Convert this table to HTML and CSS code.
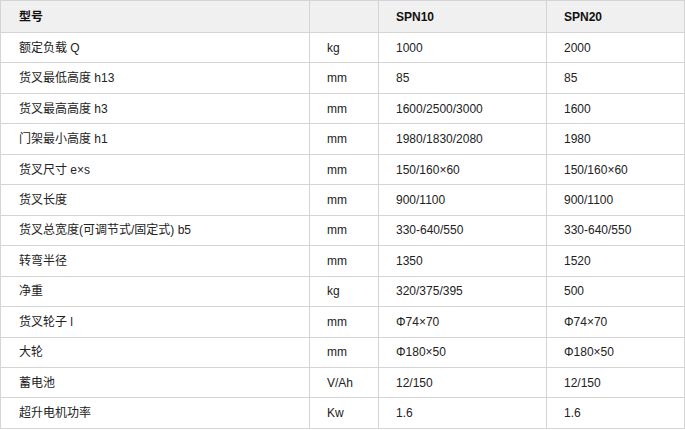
FILE: index.html
```html
<!DOCTYPE html>
<html lang="zh">
<head>
<meta charset="utf-8">
<link rel="stylesheet" href="styles.css">
</head>
<body>
<table class="spec">
  <colgroup>
    <col class="c1"><col class="c2"><col class="c3"><col class="c4">
  </colgroup>
  <thead>
    <tr class="head"><th>型号</th><th></th><th>SPN10</th><th>SPN20</th></tr>
  </thead>
  <tbody>
    <tr><td>额定负载 Q</td><td>kg</td><td>1000</td><td>2000</td></tr>
    <tr><td>货叉最低高度 h13</td><td>mm</td><td>85</td><td>85</td></tr>
    <tr><td>货叉最高高度 h3</td><td>mm</td><td>1600/2500/3000</td><td>1600</td></tr>
    <tr><td>门架最小高度 h1</td><td>mm</td><td>1980/1830/2080</td><td>1980</td></tr>
    <tr><td>货叉尺寸 e×s</td><td>mm</td><td>150/160×60</td><td>150/160×60</td></tr>
    <tr><td>货叉长度</td><td>mm</td><td>900/1100</td><td>900/1100</td></tr>
    <tr><td>货叉总宽度(可调节式/固定式) b5</td><td>mm</td><td>330-640/550</td><td>330-640/550</td></tr>
    <tr><td>转弯半径</td><td>mm</td><td>1350</td><td>1520</td></tr>
    <tr><td>净重</td><td>kg</td><td>320/375/395</td><td>500</td></tr>
    <tr><td>货叉轮子 l</td><td>mm</td><td>Φ74×70</td><td>Φ74×70</td></tr>
    <tr><td>大轮</td><td>mm</td><td>Φ180×50</td><td>Φ180×50</td></tr>
    <tr><td>蓄电池</td><td>V/Ah</td><td>12/150</td><td>12/150</td></tr>
    <tr><td>超升电机功率</td><td>Kw</td><td>1.6</td><td>1.6</td></tr>
  </tbody>
</table>
</body>
</html>
```

FILE: styles.css
```css
html, body {
  margin: 0;
  padding: 0;
  background: #ffffff;
}

.spec {
  border-collapse: collapse;
  table-layout: fixed;
  width: 684px;
  font-family: "Liberation Sans", Arial, "Noto Sans CJK SC", sans-serif;
  font-size: 12px;
  color: #222;
}

.c1 { width: 309px; }
.c2 { width: 69px; }
.c3 { width: 168px; }
.c4 { width: 138px; }

.spec th,
.spec td {
  border: 1px solid #d4d4d4;
  padding: 0 0 0 17px;
  text-align: left;
  vertical-align: middle;
  white-space: nowrap;
  line-height: 14px;
}

.spec th:first-child,
.spec td:first-child {
  padding-left: 18px;
}

.spec th {
  background: #f0f0f0;
  font-weight: bold;
  height: 31px;
  color: #111;
}

.spec td {
  height: 29.46px;
}
```
